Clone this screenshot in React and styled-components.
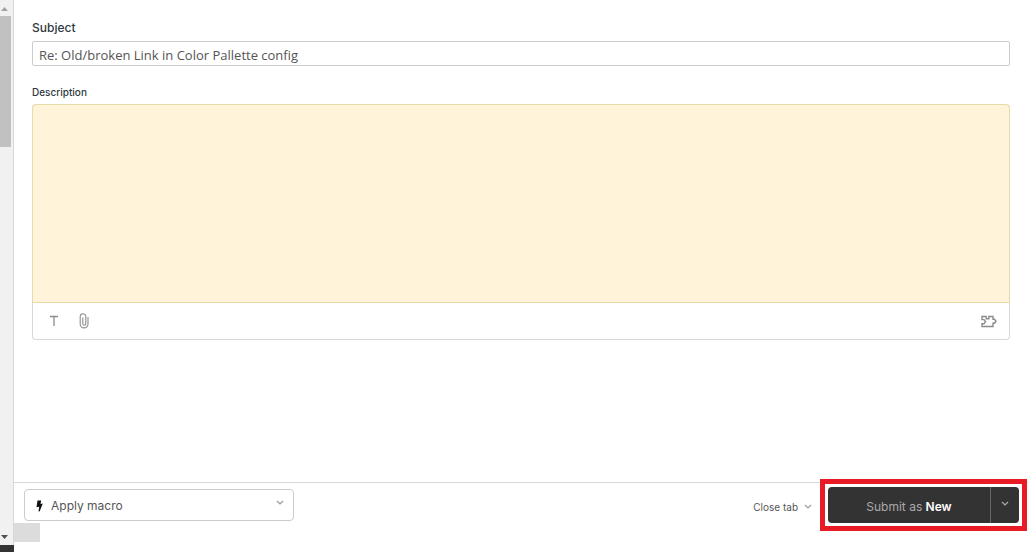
import { useState } from 'react';
import { styled, createGlobalStyle } from 'styled-components';

const GlobalStyle = createGlobalStyle`
    * {
        box-sizing: border-box;
    }
    body {
        margin: 0;
        background: #ffffff;
        color: #2f3941;
        font-family: Inter, "Liberation Sans", sans-serif;
        font-size: 12px;
    }
    button, input, textarea, select {
        font-family: inherit;
    }
`

const Page = styled.div`
    display: flex;
    min-height: 100vh;
`

const Rail = styled.div`
    display: flex;
    flex-direction: column;
    flex: none;
    width: 14px;
    background: #f1f1f1;
`

const RailTrack = styled.div`
    display: flex;
    flex-direction: column;
    flex: 1;
    border-right: 1px solid #d8d8d8;
`

const RailThumb = styled.div`
    width: 11px;
    height: 131px;
    background: #c1c1c1;
`

const RailArrow = styled.button`
    display: flex;
    align-items: center;
    height: 16px;
    width: 11px;
    margin-top: ${props => props.$end ? "auto" : "0"};
    padding: 0;
    border: none;
    background: none;
    color: ${props => props.$end ? "#505050" : "#a3a3a3"};
`

const RailEnd = styled.div`
    height: 7px;
    background: #333333;
`

const Main = styled.main`
    display: flex;
    flex-direction: column;
    flex: 1;
    min-width: 0;
`

const Fields = styled.form`
    flex: 1;
    padding: 20px 18px;
`

const Label = styled.label`
    display: block;
    height: ${props => props.$small ? "20px" : "21px"};
    line-height: 16px;
    font-size: ${props => props.$small ? "10px" : "12px"};
    font-weight: 500;
`

const SubjectInput = styled.input`
    display: block;
    width: 100%;
    height: 25px;
    margin-bottom: 18px;
    padding: 2px 6px 0;
    border: 1px solid #cccccc;
    border-radius: 2px;
    color: #555555;
    font-family: "Open Sans", "Liberation Sans", sans-serif;
    font-size: 13px;
`

const Editor = styled.div`
    border: 1px solid #d8d8d8;
    border-top: none;
    border-radius: 4px;
`

const Comment = styled.textarea`
    display: block;
    width: calc(100% + 2px);
    height: 199px;
    margin: 0 -1px;
    padding: 10px;
    border: 1px solid #e8d9a9;
    border-radius: 4px 4px 0 0;
    background: #fff3d9;
    resize: none;
    font-size: 12px;
`

const Toolbar = styled.div`
    display: flex;
    align-items: center;
    gap: 14px;
    height: 36px;
    padding: 0 12px 0 13px;
`

const ToolButton = styled.button`
    display: flex;
    align-items: center;
    justify-content: center;
    width: 16px;
    height: 20px;
    margin-left: ${props => props.$right ? "auto" : "0"};
    padding: 0;
    border: none;
    background: none;
    color: #8c8c8c;
`

const Footer = styled.footer`
    display: flex;
    align-items: flex-start;
    height: 41px;
    padding: 4px 9px 0 10px;
    border-top: 1px solid #d8d8d8;
`

const MacroPicker = styled.div`
    display: grid;
    grid-template-columns: 26px 1fr 26px;
    align-items: center;
    width: 270px;
    height: 32px;
    margin-top: 2px;
    border: 1px solid #cccccc;
    border-radius: 4px;
    color: #999999;
    svg {
        grid-row: 1;
        justify-self: center;
        pointer-events: none;
    }
    svg:first-child {
        grid-column: 1;
        justify-self: end;
        margin: 2px 8px 0 0;
    }
    svg:last-child {
        grid-column: 3;
        margin-bottom: 4px;
    }
`

const MacroSelect = styled.select`
    grid-row: 1;
    grid-column: 1 / -1;
    width: 100%;
    height: 30px;
    padding: 0 26px;
    border: none;
    background: none;
    appearance: none;
    color: #555555;
    font-size: 12px;
`

const CloseTab = styled.button`
    display: flex;
    align-items: center;
    gap: 6px;
    height: 36px;
    margin: 2px 16px 0 auto;
    padding: 0;
    border: none;
    background: none;
    color: #555555;
    font-size: 10px;
    svg {
        color: #999999;
    }
`

const SubmitGroup = styled.div`
    display: flex;
    height: 36px;
    outline: 5px solid #e81c24;
    outline-offset: 3px;
`

const SubmitButton = styled.button`
    width: 162px;
    padding: 2px 0 0;
    border: none;
    border-radius: 4px 0 0 4px;
    background: #333333;
    color: #aaaaaa;
    font-size: 12px;
    strong {
        color: #ffffff;
        font-weight: 600;
    }
`

const SubmitMenu = styled.button`
    display: flex;
    align-items: center;
    justify-content: center;
    width: 29px;
    padding: 0 0 2px;
    border: none;
    border-left: 1px solid #666666;
    border-radius: 0 4px 4px 0;
    background: #333333;
    color: #aaaaaa;
`

const StatusBlock = styled.div`
    width: 26px;
    height: 19px;
    margin-bottom: 10px;
    background: #dcdcdc;
`

function Triangle({ down }){
    return (
        <svg width="9" height="5" viewBox="0 0 9 5" aria-hidden="true">
            <path d={down ? "M1 0h7L4.500 4z" : "M1 5h7L4.500 1z"} fill="currentColor" />
        </svg>
    )
}

function Chevron(){
    return (
        <svg width="8" height="6" viewBox="0 0 8 6" fill="none" stroke="currentColor" strokeWidth="1.200" aria-hidden="true">
            <path d="M1 1l3 3 3-3" />
        </svg>
    )
}

function Bolt(){
    return (
        <svg width="7" height="12" viewBox="0 0 7 12" aria-hidden="true">
            <path d="M1.500.5h3.700L4.500 4 6.800 3.500 3.600 11.500 2.500 11.200 3.200 6.800.5 7.200z" fill="#111111" />
        </svg>
    )
}

function TextIcon(){
    return (
        <svg width="10" height="12" viewBox="0 0 10 12" fill="none" stroke="currentColor" strokeWidth="1.300" aria-hidden="true">
            <path d="M1 1.500h8M5 1.500v9.500" />
        </svg>
    )
}

function Clip(){
    return (
        <svg width="10" height="16" viewBox="0 0 10 16" fill="none" stroke="currentColor" strokeWidth="1.100" aria-hidden="true">
            <path d="M9 4v7a3.900 3.900 0 0 1-7.800 0V3.500a2.800 2.800 0 0 1 5.600 0v7.300a1.500 1.500 0 0 1-3 0V4.500" />
        </svg>
    )
}

function Puzzle(){
    return (
        <svg width="16" height="13" viewBox="0 0 16 13" fill="none" stroke="currentColor" strokeWidth="1.400" aria-hidden="true">
            <path d="M1 1.500h4.200v2.200h2.600V1.500H12V4.300h1.500l1.500 1.900-1.500 2H12v3.300H1V8.700h2l1.500-2.100-1.500-2H1z" />
        </svg>
    )
}

function App(){
    const [subject, setSubject] = useState("Re: Old/broken Link in Color Pallette config");

    return (
        <>
            <GlobalStyle />
            <Page>
                <Rail>
                    <RailTrack>
                        <RailArrow type = "button" aria-label = "Scroll up"><Triangle /></RailArrow>
                        <RailThumb />
                        <RailArrow type = "button" aria-label = "Scroll down" $end><Triangle down /></RailArrow>
                    </RailTrack>
                    <RailEnd />
                </Rail>
                <Main>
                    <Fields>
                        <Label htmlFor = "subject">Subject</Label>
                        <SubjectInput id = "subject" value = {subject} onChange = {(e) => setSubject(e.target.value)} />
                        <Label htmlFor = "description" $small>Description</Label>
                        <Editor>
                            <Comment id = "description" />
                            <Toolbar>
                                <ToolButton type = "button" aria-label = "Text"><TextIcon /></ToolButton>
                                <ToolButton type = "button" aria-label = "Attach file"><Clip /></ToolButton>
                                <ToolButton type = "button" aria-label = "Apps" $right><Puzzle /></ToolButton>
                            </Toolbar>
                        </Editor>
                    </Fields>
                    <Footer>
                        <MacroPicker>
                            <Bolt />
                            <MacroSelect aria-label = "Apply macro">
                                <option>Apply macro</option>
                            </MacroSelect>
                            <Chevron />
                        </MacroPicker>
                        <CloseTab type = "button">Close tab <Chevron /></CloseTab>
                        <SubmitGroup>
                            <SubmitButton type = "button">Submit as <strong>New</strong></SubmitButton>
                            <SubmitMenu type = "button" aria-label = "Submit options"><Chevron /></SubmitMenu>
                        </SubmitGroup>
                    </Footer>
                    <StatusBlock />
                </Main>
            </Page>
        </>
    )
}

export default App;
